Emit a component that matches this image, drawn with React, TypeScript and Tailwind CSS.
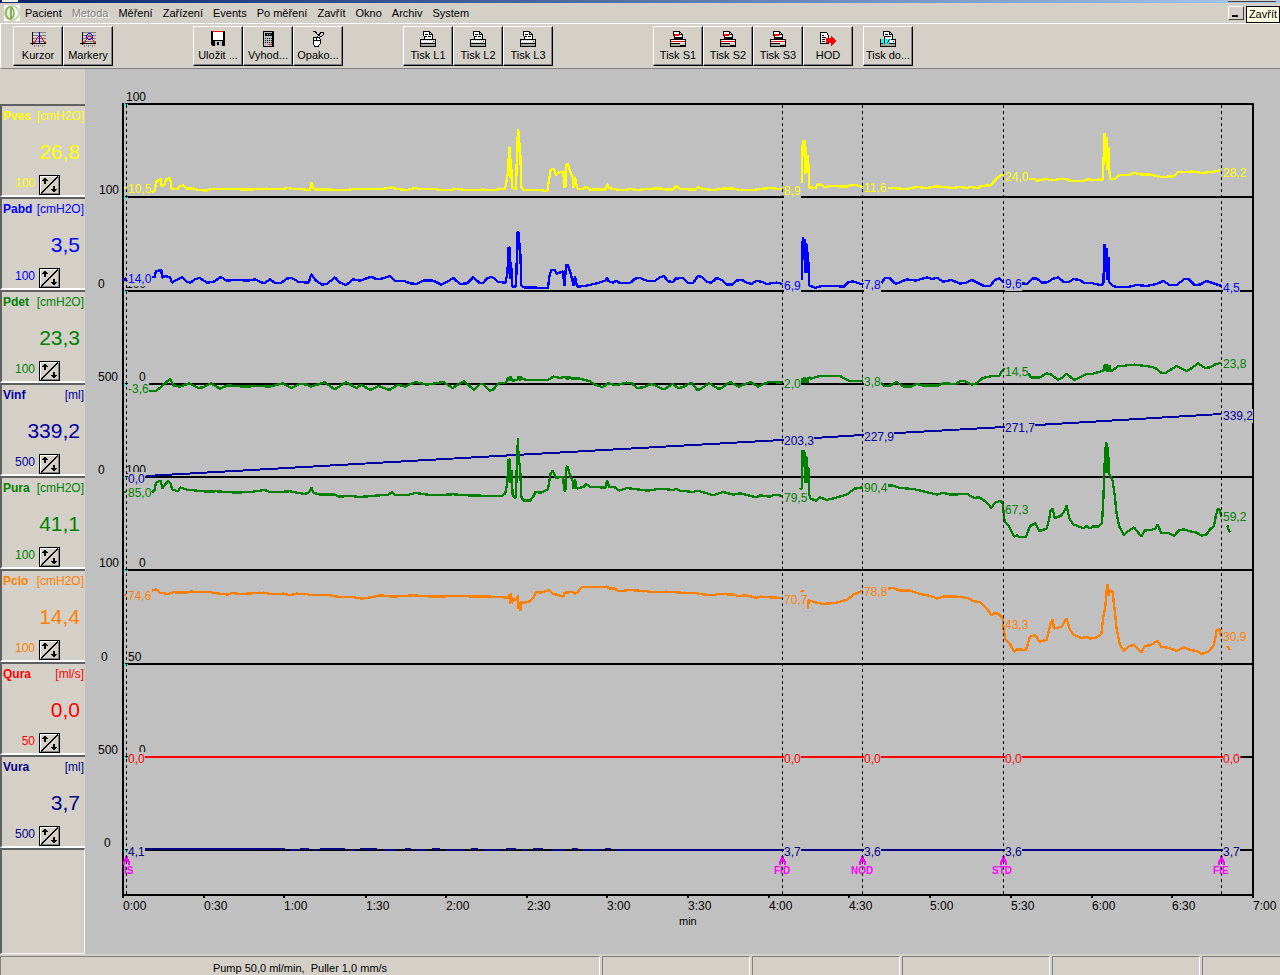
import type { FC, ReactNode } from "react";

type Channel = {
  name: string;
  unit: string;
  value: string;
  scale: string;
  textColour: string;
  colour: string;
  // value at each event marker and the baseline it is written on
  labels: [string, number][];
};

type Trace = {
  colour: string;
  x: number;
  y: number;
  points: string[];
};

const menuItems = [
  "Pacient",
  "Metoda",
  "Měření",
  "Zařízení",
  "Events",
  "Po měření",
  "Zavřít",
  "Okno",
  "Archiv",
  "System",
];

const channels: Channel[] = [
  {
    name: "Pves",
    unit: "[cmH2O]",
    value: "26,8",
    scale: "100",
    textColour: "text-[#ffff00]",
    colour: "#ffff00",
    labels: [["10,5", 193], ["8,9", 195], ["11,6", 192], ["24,0", 181], ["28,2", 177]],
  },
  {
    name: "Pabd",
    unit: "[cmH2O]",
    value: "3,5",
    scale: "100",
    textColour: "text-[#0000ff]",
    colour: "#0000ff",
    labels: [["14,0", 283], ["6,9", 290], ["7,8", 289], ["9,6", 288], ["4,5", 292]],
  },
  {
    name: "Pdet",
    unit: "[cmH2O]",
    value: "23,3",
    scale: "100",
    textColour: "text-[#008000]",
    colour: "#008000",
    labels: [["-3,6", 393], ["2,0", 388], ["3,8", 386], ["14,5", 376], ["23,8", 368]],
  },
  {
    name: "Vinf",
    unit: "[ml]",
    value: "339,2",
    scale: "500",
    textColour: "text-[#0000a0]",
    colour: "#0000a0",
    labels: [["0,0", 483], ["203,3", 445], ["227,9", 441], ["271,7", 432], ["339,2", 420]],
  },
  {
    name: "Pura",
    unit: "[cmH2O]",
    value: "41,1",
    scale: "100",
    textColour: "text-[#008000]",
    colour: "#008000",
    labels: [["85,0", 497], ["79,5", 502], ["90,4", 492], ["67,3", 514], ["59,2", 521]],
  },
  {
    name: "Pclo",
    unit: "[cmH2O]",
    value: "14,4",
    scale: "100",
    textColour: "text-[#ff8000]",
    colour: "#ff8000",
    labels: [["74,6", 600], ["70,7", 604], ["78,8", 596], ["43,3", 629], ["30,9", 641]],
  },
  {
    name: "Qura",
    unit: "[ml/s]",
    value: "0,0",
    scale: "50",
    textColour: "text-[#ff0000]",
    colour: "#ff0000",
    labels: [["0,0", 763], ["0,0", 763], ["0,0", 763], ["0,0", 763], ["0,0", 763]],
  },
  {
    name: "Vura",
    unit: "[ml]",
    value: "3,7",
    scale: "500",
    textColour: "text-[#000080]",
    colour: "#000080",
    labels: [["4,1", 856], ["3,7", 856], ["3,6", 856], ["3,6", 856], ["3,7", 856]],
  },
];

const markers = [
  { x: 126, name: "IS", left: 124 },
  { x: 782, name: "FID", left: 774 },
  { x: 862, name: "NOD", left: 851 },
  { x: 1003, name: "STD", left: 992 },
  { x: 1221, name: "FIE", left: 1213 },
];

const rowLines = [104, 197, 291, 384, 477, 570, 664, 757, 850];

// range captions beside and above the rows
const rangeLabels: [number, number, string][] = [
  [126, 101, "100"],
  [99, 194, "100"],
  [98, 288, "0"],
  [126, 288, "100"],
  [98, 381, "500"],
  [139, 381, "0"],
  [98, 474, "0"],
  [126, 474, "100"],
  [99, 567, "100"],
  [139, 567, "0"],
  [101, 661, "0"],
  [128, 661, "50"],
  [98, 754, "500"],
  [139, 754, "0"],
  [104, 847, "0"],
];

const timeLabels: [number, string][] = [
  [123, "0:00"],
  [204, "0:30"],
  [284, "1:00"],
  [366, "1:30"],
  [446, "2:00"],
  [527, "2:30"],
  [607, "3:00"],
  [688, "3:30"],
  [769, "4:00"],
  [849, "4:30"],
  [930, "5:00"],
  [1011, "5:30"],
  [1092, "6:00"],
  [1172, "6:30"],
  [1253, "7:00"],
];

// points are counted in thirds of a chart unit from the origin of the trace
const traces: Trace[] = [
  {
    colour: "#ffff00",
    x: 120,
    y: 170,
    points: [
      "12,55 18,55",
      "96,67 104,62 108,38 116,30 122,26 125,48 133,46 138,28 150,24 155,56 172,58 178,50 190,46 200,56 220,55 230,59 258,62 270,58 340,56 370,59 400,58 440,56 480,58 506,54 520,58 540,57 566,60 571,58 574,38 579,50 582,58 680,60 700,57 780,58 815,52 830,57 860,60 885,54 900,57 920,58 940,56 960,60 990,60 1010,57 1040,60 1080,60",
    ],
  },
  {
    colour: "#ffff00",
    x: 480,
    y: 90,
    points: [
      "0,300 8,297 12,300 50,300 58,296 74,297 78,284 82,258 85,240 87,173 90,173 91,260 93,208 96,294 108,298 111,188 114,118 116,130 117,185 120,160 124,290 130,300 180,300 202,304 206,276 212,240 222,236 228,256 236,248 250,244 253,292 256,292 258,224 264,222 270,244 278,262 281,294 285,262 292,296 310,297 318,290 330,299 378,299 381,282 388,294 395,296 420,300 435,300 450,296 470,300 500,297 540,295 560,299 580,298 589,288 600,297 645,299 654,291 670,297 700,300 730,296 760,296 780,300 820,300 840,297 870,294 906,298",
      "966,278 966,200 969,150 972,200 975,150 975,252 978,170 981,250 984,195 988,292 1008,294 1012,284 1024,284 1032,292 1050,288 1100,290 1115,285 1130,286 1148,291",
    ],
  },
  {
    colour: "#ffff00",
    x: 880,
    y: 90,
    points: [
      "24,294 80,297 110,291 140,294 170,289 200,292 220,294 240,291 260,294 270,291 295,294 302,288 332,286 350,266 362,256 372,255",
      "446,267 465,268 472,272 500,266 512,271 535,268 560,268 570,272 610,273 625,267 638,271 662,268 668,270 671,205 674,128 677,215 680,140 682,240 686,172 688,242 691,268 705,266 718,256 750,255 762,248 780,253 810,254 845,261 880,259 894,247 925,247 935,244 965,249 1000,245 1020,241",
    ],
  },
  {
    colour: "#0000ff",
    x: 120,
    y: 170,
    points: [
      "12,333 18,322",
      "96,322 104,322 108,303 124,300 126,324 134,318 150,322 156,338 166,332 186,322 200,336 212,338 224,328 238,324 262,338 280,336 302,321 320,332 350,330 385,332 404,328 432,340 450,328 466,340 482,340 500,326 516,324 536,336 566,338 574,312 586,330 606,344 620,342 646,322 656,336 678,345 700,328 720,332 754,320 770,328 785,326 810,318 826,334 850,332 870,340 890,342 910,332 940,332 964,344 980,336 1000,324 1020,342 1042,340 1060,322 1080,340",
    ],
  },
  {
    colour: "#0000ff",
    x: 480,
    y: 90,
    points: [
      "0,580 8,580 20,566 34,560 44,566 54,576 76,578 82,552 86,472 90,474 91,568 93,515 97,590 108,590 111,485 113,425 117,428 117,480 120,458 124,586 130,592 204,594 208,560 214,540 224,540 230,552 248,544 254,588 258,524 264,526 272,550 281,588 285,558 291,590 316,588 350,580 376,572 381,562 386,574 398,578 410,572 420,580 450,580 465,566 480,564 500,572 522,574 540,562 552,558 564,574 580,576 586,566 610,564 626,580 640,578 654,558 668,562 680,576 695,578 710,564 725,570 740,584 756,584 770,572 786,570 800,578 815,582 830,572 846,576 860,582 890,578 908,582",
      "966,570 966,485 969,440 972,510 975,446 976,548 979,458 982,548 984,486 988,586 1006,594 1025,588 1060,588 1092,590 1106,576 1120,574 1136,580 1150,584",
    ],
  },
  {
    colour: "#0000ff",
    x: 880,
    y: 90,
    points: [
      "4,580 14,565 28,564 46,581 58,578 80,568 108,572 128,566 142,562 154,567 172,564 190,575 214,570 240,581 258,578 276,570 296,580 310,587 330,588 345,570 358,564 372,578",
      "426,580 442,582 456,566 470,565 486,578 500,578 520,566 535,562 552,577 566,577 580,567 598,570 612,578 638,580 660,585 670,583 672,525 674,463 677,545 681,475 683,570 687,500 688,578 700,588 712,592 750,590 770,585 800,588 830,582 850,573 868,585 890,585 912,568 926,567 944,586 962,583 980,573 1000,580 1024,588",
    ],
  },
  {
    colour: "#008000",
    x: 120,
    y: 170,
    points: [
      "86,663 108,663 124,650 150,627 160,646 180,650 208,640 234,654 250,652 272,640 300,656 324,646 370,650 420,648 450,650 488,640 514,654 540,642 560,644 574,650 614,637 644,658 678,637 710,654 724,644 750,660 776,648 808,660 834,644 856,650 886,636 920,644 970,636 998,654 1032,633 1062,660 1080,642",
      "12,968 18,964",
      "96,967 104,960 108,938 122,932 127,955 134,945 145,934 152,940 156,958 175,964 180,952 200,959 230,962 262,965 290,964 320,966 350,968 400,965 433,960 450,966 480,966 510,964 530,968 555,972 568,966 574,952 580,968 600,974 645,974 658,980 690,978 720,981 780,976 805,974 816,967 824,974 860,976 886,969 915,973 940,976 1000,973 1040,976 1080,977",
    ],
  },
  {
    colour: "#008000",
    x: 480,
    y: 90,
    points: [
      "0,882 10,882 28,902 38,900 56,880 78,878 84,862 88,872 92,858 97,872 112,870 116,860 120,872 122,860 126,866 140,870 204,870 220,860 240,864 258,860 262,870 266,860 275,866 298,866 330,874 345,884 368,892 384,880 408,886 440,878 455,880 472,894 490,892 514,882 526,886 548,898 556,896 578,882 594,894 608,892 634,878 652,900 660,898 688,880 714,896 722,896 750,876 776,890 812,876 834,890 866,876 908,878",
      "964,878 966,864 970,878 973,862 976,878 980,864 983,878 986,862 992,866 1020,858 1080,858 1110,874 1148,872",
    ],
  },
  {
    colour: "#008000",
    x: 880,
    y: 90,
    points: [
      "0,876 12,888 30,887 50,876 70,890 92,890 110,882 130,887 175,887 190,880 228,882 240,873 256,874 276,884 290,880 308,864 340,858 358,858 366,842 374,836",
      "446,850 452,862 478,863 500,850 514,854 534,870 545,864 560,851 582,870 605,860 620,852 640,851 670,842 675,822 678,844 682,824 685,846 688,826 690,844 700,840 714,828 730,828 740,826 764,824 810,830 826,834 846,850 858,848 890,828 905,836 920,844 936,834 954,820 975,834 992,832 1004,824 1024,818",
    ],
  },
  {
    colour: "#008000",
    x: 480,
    y: 400,
    points: [
      "0,287 66,288 76,280 82,246 86,178 91,180 91,250 94,210 98,284 104,294 108,290 111,175 114,115 116,190 120,192 124,290 130,302 150,302 162,286 166,276 184,278 204,268 212,220 218,212 228,234 248,230 254,272 256,272 258,205 262,198 270,225 278,242 281,268 285,238 290,266 312,260 318,252 330,260 376,263 381,242 388,262 404,262 418,272 440,264 470,268 505,272 540,266 580,270 589,266 600,272 640,276 652,272 670,277 700,286 730,276 760,284 780,280 830,292 840,286 870,290 884,284 908,288",
      "960,268 966,264 967,150 971,200 973,150 976,250 979,168 982,250 985,200 988,286 992,296 1008,302 1020,292 1040,300 1065,294 1100,284 1124,266 1148,262",
    ],
  },
  {
    colour: "#008000",
    x: 880,
    y: 390,
    points: [
      "24,286 40,287 60,294 100,297 130,304 172,314 190,308 210,314 262,312 282,324 298,322 320,337 334,354 345,338 362,332 368,342 374,395 386,408 402,440 410,436 418,442 438,441 450,408 466,400 478,423 500,416 508,385 512,360 518,355 524,384 542,378 552,366 560,347 568,385 580,403 610,415 620,408 630,415 640,409 655,410 666,400 670,330 673,250 676,170 678,250 679,155 682,250 684,172 687,250 692,262 698,272 704,315 710,370 718,410 732,436 744,424 762,412 784,440 794,422 812,420 826,416 833,404 844,430 868,430 882,438 896,422 912,418 930,424 950,428 965,437 980,433 990,418 1002,408 1008,375 1014,356 1020,360 1024,382",
      "1042,406 1046,420 1050,428",
    ],
  },
  {
    colour: "#ff8000",
    x: 120,
    y: 170,
    points: [
      "12,1275 18,1275",
      "96,1262 108,1258 118,1268 145,1272 160,1267 200,1268 210,1265 265,1266 290,1270 325,1274 335,1269 360,1272 400,1270 430,1268 455,1273 490,1271 510,1276 530,1271 560,1272 575,1276 630,1276 650,1280 700,1282 725,1286 760,1281 780,1276 820,1280 880,1276 920,1279 960,1280 1000,1278 1080,1280",
    ],
  },
  {
    colour: "#ff8000",
    x: 480,
    y: 400,
    points: [
      "0,590 30,590 70,592 84,594 88,582 90,612 93,580 96,610 100,598 110,600 114,586 116,628 118,606 121,632 124,604 126,610 150,604 162,590 168,576 184,578 206,570 216,580 250,590 254,578 280,576 284,582 292,578 304,562 330,562 380,560 390,566 404,566 416,574 450,570 500,574 520,577 560,575 600,578 650,580 690,586 720,582 760,584 775,588 800,586 830,594 840,590 870,592 908,594",
      "962,572 972,574",
      "984,626 986,600 1000,606 1030,612 1070,608 1104,598 1120,584 1148,572",
    ],
  },
  {
    colour: "#ff8000",
    x: 880,
    y: 390,
    points: [
      "24,596 40,594 60,602 90,602 120,612 150,618 172,626 190,620 230,620 264,624 280,634 300,636 320,655 334,676 346,668 358,674 368,685 370,712 376,748 390,762 402,785 412,778 438,780 450,740 466,735 478,755 500,750 512,700 518,688 522,716 545,710 560,684 568,715 580,733 605,745 620,740 630,746 650,742 664,732 670,680 676,650 680,600 683,582 686,618 690,600 698,606 704,660 710,715 720,765 732,783 745,770 762,765 784,788 795,768 812,766 833,752 843,770 870,775 890,783 912,772 930,780 950,783 965,792 985,785 1002,766 1010,722 1018,716 1024,742",
      "1042,768 1050,780",
    ],
  },
];

const labelWidth = (text: string) =>
  [...text].reduce((sum, c) => sum + (c === "," ? 3.3 : c === "-" ? 4 : 6.7), 0);

const Icon: FC<{ children: ReactNode }> = ({ children }) => (
  <svg viewBox="0 0 16 16" className="h-4 w-4 shrink-0" shapeRendering="crispEdges" aria-hidden="true">
    {children}
  </svg>
);

const GridLines = () => (
  <>
    <path d="M2 1.5H16M2 4.5H16M2 7.5H16M2 10.5H16" stroke="#808080" fill="none" />
    <path d="M4.5 14V16M6.5 14V15M8.5 14V16M10.5 14V15M12.5 14V16M14.5 14V15" stroke="#808080" fill="none" />
    <path d="M2.5 1V14M0 12.5H16" stroke="#000" fill="none" />
  </>
);

const CursorIcon = () => (
  <Icon>
    <GridLines />
    <path d="M3 11H5V12H3ZM5 9H6V11H5ZM6 7H7V9H6ZM7 6H8V7H7ZM8 5H11V6H8ZM11 6H12V7H11ZM12 7H13V9H12ZM13 9H14V11H13ZM14 11H16V12H14Z" fill="#f00" />
    <path d="M9 1H10V13H9Z" fill="#00f" />
  </Icon>
);

const MarkersIcon = () => (
  <Icon>
    <GridLines />
    <path d="M3 11H5V12H3ZM5 9H6V11H5ZM6 7H7V9H6ZM7 6H8V7H7ZM8 5H11V6H8ZM11 6H12V7H11ZM12 7H13V9H12ZM13 9H14V11H13ZM14 11H16V12H14Z" fill="#f00" />
    <path d="M8 2H11V3H8ZM7 3H8V4H7ZM11 3H12V4H11ZM6 4H7V7H6ZM12 4H13V7H12ZM7 7H8V8H7ZM11 7H12V8H11ZM8 8H11V9H8Z" fill="#00f" />
  </Icon>
);

const FloppyIcon = () => (
  <Icon>
    <path d="M1 0H15V15H2L1 14Z" fill="#000" />
    <path d="M3 1H13V9H3Z" fill="#fff" />
    <path d="M3 0H13V1H3Z" fill="#f00" />
    <path d="M5 10H12V15H5Z" fill="#c0c0c0" />
    <path d="M7 11H9V14H7Z" fill="#000" />
  </Icon>
);

const CalculatorIcon = () => (
  <Icon>
    <path d="M3 0H14V16H3Z" fill="#000" />
    <path d="M4 1H12V15H4Z" fill="#c0c0c0" />
    <path d="M5 2H12V5H5Z" fill="#000" />
    <path d="M7 3H8V4H7ZM9 3H10V4H9Z" fill="#0ff" />
    <path d="M5 7.5H12M5 9.5H12M5 11.5H12" stroke="#000" strokeDasharray="1 1" fill="none" />
    <path d="M9 13H12V14H9Z" fill="#f00" />
  </Icon>
);

const MouseIcon = () => (
  <Icon>
    <path d="M3 .5H5L9 5M7 6L11 1.5H13L14 3L12 5H10L7 3" stroke="#000" fill="none" />
    <path d="M4 6H9L10 8V13L8 15.5H5L3 13V8Z" fill="#fff" stroke="#000" />
    <path d="M3 9.5H10M6.5 6V9" stroke="#000" fill="none" />
  </Icon>
);

const PrinterIcon = () => (
  <Icon>
    <path d="M4.5 8.5L3.5 .5H9.5L12.5 3.5V8.5Z" fill="#fff" stroke="#000" />
    <path d="M9.5 .5V3.5H12.5M5 3.5H8M5 5.5H7M8 5.5H11" stroke="#000" fill="none" />
    <path d="M0 8H16V16H0Z" fill="#000" />
    <path d="M1 9H15V12H1Z" fill="#fff" />
    <path d="M1 9.5H15M2 11.5H15" stroke="#c0c0c0" strokeDasharray="1 1" />
    <path d="M1 13H15V15H1Z" fill="#a0a8a0" />
    <path d="M13 10H14V11H13Z" fill="#f00" />
  </Icon>
);

const SeriesPrinterIcon = () => (
  <Icon>
    <path d="M4.5 8.5L3.5 .5H9.5L12.5 3.5V8.5Z" fill="#fff" stroke="#000" />
    <path d="M9.5 .5V3.5H12.5" stroke="#000" fill="none" />
    <path d="M4 3H9V5H4Z" fill="#f00" />
    <path d="M5 6H12V8H5Z" fill="#000" />
    <path d="M0 8H16V16H0Z" fill="#000" />
    <path d="M1 9H15V12H1Z" fill="#fff" />
    <path d="M1 10H15V11H1Z" fill="#f00" />
    <path d="M1 13H10V15H1Z" fill="#a0a8a0" />
    <path d="M10 12H15V14H10Z" fill="#d4d0c8" />
  </Icon>
);

const ExportIcon = () => (
  <Icon>
    <path d="M.5 1.5H6.5L8.5 4.5V12.5H.5Z" fill="#fff" stroke="#000" />
    <path d="M2 4.5H4M2 6.5H6M2 8.5H5M2 10.5H5" stroke="#000" fill="none" />
    <path d="M6 7H11V4L16 10L11 15V12H6Z" fill="#f00" />
  </Icon>
);

const PrintToIcon = () => (
  <Icon>
    <path d="M4.5 8.5L3.5 .5H9.5L12.5 3.5V8.5Z" fill="#fff" stroke="#000" />
    <path d="M9.5 .5V3.5H12.5M5 3.5H8M5 5.5H11" stroke="#000" fill="none" />
    <path d="M0 8H16V16H0Z" fill="#000" />
    <path d="M1 9H15V12H1Z" fill="#fff" />
    <path d="M1 13H15V15H1Z" fill="#a0a8a0" />
    <path d="M1 8H11L9 13H3L1 10Z" fill="#0ff" />
    <path d="M4.5 8V13M7.5 12L9.5 8" stroke="#000" fill="none" />
    <path d="M13 10H14V11H13Z" fill="#f00" />
  </Icon>
);

const toolGroups: { spacing: string; tools: { label: string; icon: ReactNode }[] }[] = [
  {
    spacing: "ml-3",
    tools: [
      { label: "Kurzor", icon: <CursorIcon /> },
      { label: "Markery", icon: <MarkersIcon /> },
    ],
  },
  {
    spacing: "ml-20",
    tools: [
      { label: "Uložit ...", icon: <FloppyIcon /> },
      { label: "Vyhod...", icon: <CalculatorIcon /> },
      { label: "Opako...", icon: <MouseIcon /> },
    ],
  },
  {
    spacing: "ml-15",
    tools: [
      { label: "Tisk L1", icon: <PrinterIcon /> },
      { label: "Tisk L2", icon: <PrinterIcon /> },
      { label: "Tisk L3", icon: <PrinterIcon /> },
    ],
  },
  {
    spacing: "ml-25",
    tools: [
      { label: "Tisk S1", icon: <SeriesPrinterIcon /> },
      { label: "Tisk S2", icon: <SeriesPrinterIcon /> },
      { label: "Tisk S3", icon: <SeriesPrinterIcon /> },
      { label: "HOD", icon: <ExportIcon /> },
    ],
  },
  {
    spacing: "ml-[10px]",
    tools: [{ label: "Tisk do...", icon: <PrintToIcon /> }],
  },
];

const MenuBar = () => (
  <nav className="flex h-5 items-center pl-1">
    <svg viewBox="0 0 16 16" className="h-4 w-4" aria-hidden="true">
      <rect width="16" height="16" fill="#fff" />
      <circle cx="8" cy="8" r="7" fill="none" stroke="#c4d8a8" strokeWidth="2" />
      <ellipse cx="6" cy="8" rx="4" ry="6" fill="#e4eed4" stroke="#8aac5c" strokeWidth="1.5" />
      <path d="M7 3V13" stroke="#6f9440" strokeWidth="1.5" />
    </svg>
    <div className="ml-[5px] flex gap-[10px]">
      {menuItems.map((item) => (
        <button
          key={item}
          type="button"
          disabled={item === "Metoda"}
          className="whitespace-nowrap leading-4 disabled:text-[#808080] disabled:[text-shadow:1px_1px_0_#fff]"
        >
          {item}
        </button>
      ))}
    </div>
    <button
      type="button"
      aria-label="Minimalizovat"
      className="mr-9 ml-auto flex h-[14px] w-4 items-end border border-t-white border-r-[#404040] border-b-[#404040] border-l-white pb-[2px] pl-[3px]"
    >
      <span className="h-[2px] w-[6px] bg-black" />
    </button>
  </nav>
);

const ToolBar = () => (
  <div className="flex h-[46px] border-t border-b border-l border-t-white border-b-[#808080] border-l-white pt-[2px]">
    {toolGroups.map((group) => (
      <div key={group.spacing} className={`flex ${group.spacing}`}>
        {group.tools.map((tool) => (
          <button
            key={tool.label}
            type="button"
            className="flex h-10 w-[50px] flex-col items-center gap-[2px] border border-t-white border-r-black border-b-black border-l-white pt-1 whitespace-nowrap shadow-[inset_-1px_-1px_0_#808080]"
          >
            {tool.icon}
            <span className="leading-3">{tool.label}</span>
          </button>
        ))}
      </div>
    ))}
  </div>
);

const ChannelPanel: FC<{ channel: Channel }> = ({ channel }) => {
  const { name, unit, value, scale, textColour } = channel;

  return (
    <section
      className={`border-t-2 border-b-2 border-l-2 border-t-[#606060] border-b-white border-l-[#606060] pt-[2px] ${textColour}`}
    >
      <div className="flex justify-between pr-px pl-px text-xs leading-4">
        <h2 className="font-bold">{name}</h2>
        <span>{unit}</span>
      </div>
      <p className="mt-[14px] pr-[5px] text-right text-[21px] leading-7">{value}</p>
      <div className="mt-[9px] flex h-5 justify-end gap-1 pr-[25px] text-xs leading-4">
        <span>{scale}</span>
        <button type="button" aria-label={`Rozsah ${name}`} className="h-5 w-[21px]">
          <svg viewBox="0 0 21 20" className="h-5 w-[21px]" shapeRendering="crispEdges">
            <path d="M.5 .5H20.5V19.5H.5Z" fill="#d4d0c8" stroke="#000" />
            <path d="M1.5 18V1.5H19" fill="none" stroke="#fff" />
            <path d="M19.5 2V18.5H2" fill="none" stroke="#808080" />
            <path d="M2 18.5L19 1.5" fill="none" stroke="#000" />
            <path d="M5 3H7V4H8V5H9V6H7V9H5V6H3V5H4V4H5ZM14 11H16V14H18V15H17V16H16V17H14V16H13V15H12V14H14Z" fill="#000" />
          </svg>
        </button>
      </div>
    </section>
  );
};

const Chart = () => (
  <svg
    viewBox="85 69 1195 885"
    className="block h-auto w-full"
    fontFamily="'Liberation Sans', Arial, sans-serif"
    fontSize="12"
    role="img"
    aria-label="Průběh měření"
  >
    <g shapeRendering="crispEdges" stroke="#000" strokeWidth="2">
      {rowLines.map((y) => (
        <line key={y} x1="122" x2="1254" y1={y} y2={y} />
      ))}
      <path d="M123 103V896M1253 103V896M122 895H1254" fill="none" />
      {timeLabels.map(([x]) => (
        <line key={x} x1={x} x2={x} y1="895" y2="898" />
      ))}
    </g>

    {rangeLabels.map(([x, y, text]) => (
      <text key={`${x}-${y}`} x={x} y={y}>
        {text}
      </text>
    ))}
    {timeLabels.map(([x, text]) => (
      <text key={text} x={x} y="910">
        {text}
      </text>
    ))}
    <text x="679" y="925" fontSize="11">
      min
    </text>

    <g fill="none" strokeWidth="2" shapeRendering="crispEdges">
      <path d="M146 476L480 457L782 440L862 435L1004 427L1221 414" stroke="#0000a0" />
      <path d="M145 757H1241" stroke="#ff0000" />
      <path d="M145 849H285M289 850H298M300 849H309M313 850H318M320 849H345M350 850H355M360 849H377M383 850H397M405 849H411M415 850H426M432 849H440M445 850H465M471 849H478M482 850H502M506 849H516M522 850H527M533 849H543M552 850H565M572 849H578M582 850H601M605 849H611M615 850H1241" stroke="#000080" />
    </g>

    {traces.map((trace) => (
      <g
        key={`${trace.colour}-${trace.x}-${trace.y}`}
        transform={`translate(${trace.x} ${trace.y}) scale(0.3333)`}
        fill="none"
        stroke={trace.colour}
        strokeWidth="7"
        strokeLinejoin="bevel"
        shapeRendering="crispEdges"
      >
        {trace.points.map((points) => (
          <polyline key={points} points={points} />
        ))}
      </g>
    ))}

    {channels.map((channel) =>
      channel.labels.map(([text, y], i) => (
        <g key={`${channel.name}-${markers[i].name}`}>
          <rect
            x={markers[i].x + 2}
            y={y - 11}
            width={labelWidth(text)}
            height="14"
            fill="#c0c0c0"
            shapeRendering="crispEdges"
          />
          <text x={markers[i].x + 2} y={y} fill={channel.colour}>
            {text}
          </text>
        </g>
      ))
    )}

    {markers.map(({ x, name, left }) => (
      <g key={name}>
        <path
          d={`M${x - 1} 856h3v3h1v2h1v4h-2v-3h-3v3h-2v-4h1v-2h1z`}
          fill="#ff00ff"
          shapeRendering="crispEdges"
        />
        <text x={left} y="874" fontSize="10" fontWeight="bold" fill="#ff00ff">
          {name}
        </text>
        <path
          d={`M${x + 0.5} 105V895`}
          stroke="#000"
          strokeDasharray="3 3"
          shapeRendering="crispEdges"
        />
      </g>
    ))}

    {rowLines.map((y) => (
      <path key={y} d={`M124 ${y - 1}h1v1h1v1h-1v1h-1zM127 ${y}h1v1h-1z`} fill="#00ffff" shapeRendering="crispEdges" />
    ))}
  </svg>
);

const StatusBar = () => (
  <footer className="flex h-[21px] gap-[2px] pt-[2px]">
    <p className="w-[600px] shrink border-t border-r border-l border-t-[#808080] border-r-white border-l-[#808080] pt-[3px] text-center leading-4 whitespace-pre">
      {"Pump 50,0 ml/min,  Puller 1,0 mm/s"}
    </p>
    {[1, 2, 3, 4].map((cell) => (
      <div
        key={cell}
        className="w-[148px] border-t border-r border-l border-t-[#808080] border-r-white border-l-[#808080]"
      />
    ))}
    <div className="flex-1 border-t border-l border-[#808080]" />
  </footer>
);

const App: FC = () => {
  return (
    <div className="relative flex min-h-screen flex-col bg-[#d4d0c8] font-['Liberation_Sans',Arial,sans-serif] text-[11px] text-black">
      <div className="flex h-[3px] justify-between bg-linear-to-r from-[#0a246a] to-[#a6caf0] pr-1 pl-[2px]">
        <span className="h-[2px] w-4 bg-[#e8f0e0]" />
        <span className="h-[2px] w-12 border-b border-[#404040] bg-[#d4d0c8]" />
      </div>
      <MenuBar />
      <ToolBar />

      <main className="flex flex-1">
        <aside className="flex w-[85px] shrink-0 flex-col pt-[35px]">
          {channels.map((channel) => (
            <ChannelPanel key={channel.name} channel={channel} />
          ))}
          <div className="flex-1 border-t-2 border-r border-b border-l-2 border-t-[#606060] border-r-white border-b-white border-l-[#606060]" />
        </aside>
        <div className="min-w-0 flex-1 bg-[#c0c0c0]">
          <Chart />
        </div>
      </main>

      <StatusBar />

      <div
        role="tooltip"
        className="absolute top-[6px] right-0 border border-black bg-[#ffffe1] px-[2px] leading-[15px]"
      >
        Zavřít
      </div>
    </div>
  );
};

export default App;
